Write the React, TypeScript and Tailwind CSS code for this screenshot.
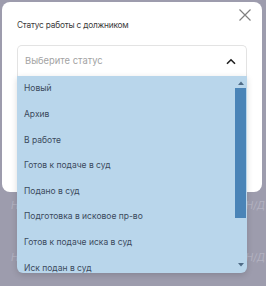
import React from 'react';

const statuses = [
  'Новый',
  'Архив',
  'В работе',
  'Готов к подаче в суд',
  'Подано в суд',
  'Подготовка в исковое пр-во',
  'Готов к подаче иска в суд',
  'Иск подан в суд',
];

export default function App() {
  return (
    <div className="relative w-[266px] h-[286px] overflow-hidden bg-[#9d9cad] font-['Inter',sans-serif]">
      {/* page behind the modal */}
      <div className="flex flex-col gap-[37px] pt-[198px] pl-[11px] pr-[1px] text-[10px] leading-[15px] italic text-[#b3b2c1]">
        <div className="flex justify-between">
          <span>Н/Д</span>
          <span>Н/Д</span>
        </div>
        <div className="flex justify-between">
          <span>Н/Д</span>
          <span>Н/Д</span>
        </div>
      </div>

      {/* modal */}
      <div className="absolute left-[2px] top-[2px] w-[260px] h-[190px] rounded-[8px] bg-white px-[15px] pt-[16px]">
        <button className="absolute right-[10px] top-[6px] text-[#808080]">
          <svg width="14" height="14" viewBox="0 0 14 14" fill="none" stroke="currentColor" strokeWidth="1.2">
            <path d="M1.5 1.5l11 11M12.5 1.5l-11 11" />
          </svg>
        </button>
        <div className="text-[8.3px] leading-[14px] tracking-[-0.2px] text-[#3b3b3b]">Статус работы с должником</div>

        <div className="relative mt-[13px]">
          <div className="flex items-center justify-between h-[31px] rounded-t-[5px] border border-b-0 border-[#e3e3e3] pl-[7px] pr-[10px]">
            <span className="text-[9.4px] text-[#a3a3a3]">Выберите статус</span>
            <svg width="10" height="7" viewBox="0 0 10 7" fill="none" stroke="#1f1f1f" strokeWidth="1.6">
              <path d="M1 5.8L5 1.8l4 4" />
            </svg>
          </div>

          {/* open options list */}
          <div className="absolute left-0 right-0 top-[31px] flex h-[197px] rounded-b-[6px] bg-[#b9d6eb] shadow-[0_2px_6px_rgba(0,0,0,0.15)] overflow-hidden">
            <ul className="flex-1 overflow-hidden">
              {statuses.map((s) => (
                <li key={s} className="flex items-center h-[25.6px] pl-[7px] text-[8.5px] text-[#3b4a5d]">
                  {s}
                </li>
              ))}
            </ul>
            <div className="flex flex-col items-center w-[11px] mr-[1px] pt-[5px] pb-[6px]">
              <svg width="6" height="4" viewBox="0 0 6 4">
                <path d="M0 4L3 0.5 6 4z" fill="#4f6b86" />
              </svg>
              <div className="mt-[3px] w-[11px] h-[130px] bg-[#4a84b7]" />
              <div className="flex-1" />
              <svg width="6" height="4" viewBox="0 0 6 4">
                <path d="M0 0L3 3.5 6 0z" fill="#4f6b86" />
              </svg>
            </div>
          </div>
        </div>
      </div>
    </div>
  );
}
